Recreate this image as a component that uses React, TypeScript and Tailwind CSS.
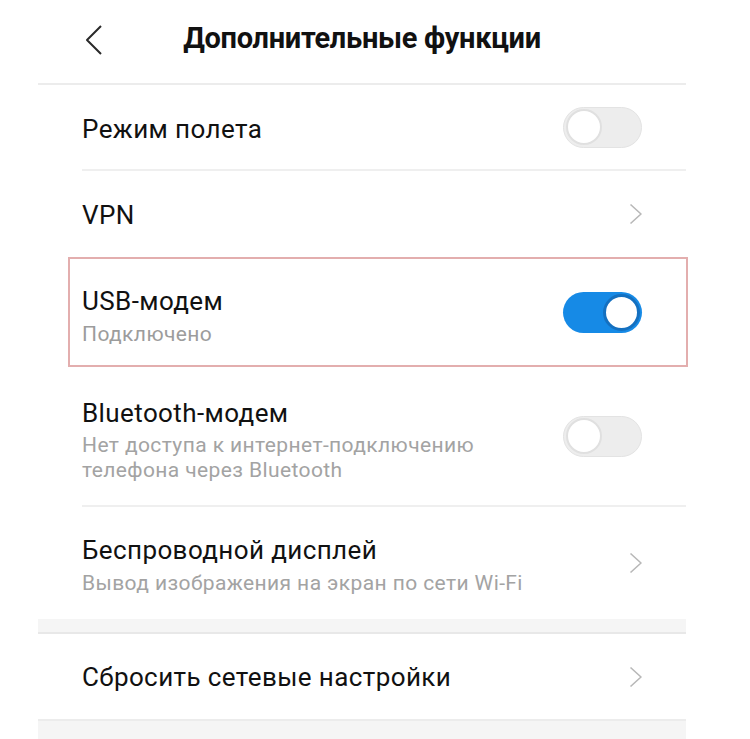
function Chevron() {
    return (
        <svg width="14" height="22" viewBox="0 0 14 22" fill="none" className="mr-[43px]">
            <polyline points="1.5,1.5 12,11 1.5,20.5" stroke="#b8b8b8" strokeWidth="1.6" strokeLinejoin="round" />
        </svg>
    );
}

function Toggle({ on }: { on: boolean }) {
    if (on) {
        return (
            <div className="mr-[44px] w-[79px] h-[41px] rounded-full bg-[#168ae6] flex items-center justify-end pr-[2px]">
                <div className="w-[37px] h-[37px] rounded-full bg-white border-[3px] border-[#1470c0]" />
            </div>
        );
    }
    return (
        <div className="mr-[44px] w-[79px] h-[41px] rounded-full bg-[#ededed] border border-[#e3e3e3] flex items-center pl-[2px]">
            <div className="w-[36px] h-[36px] rounded-full bg-white border-2 border-[#e0e0e0]" />
        </div>
    );
}

function App() {
    const font = { fontFamily: "Roboto, 'Noto Sans', sans-serif" };

    return (
        <div className="w-[750px] h-[739px] bg-white overflow-hidden pl-[38px]" style={font}>
            <div className="w-[648px] flex flex-col">
                {/* Шапка */}
                <div className="relative h-[85px] flex items-center justify-center border-b-2 border-[#ececec]">
                    <svg width="20" height="32" viewBox="0 0 20 32" fill="none" className="absolute left-[46px] top-[24px]">
                        <polyline points="17,2 3,16 17,30" stroke="#2a2a2a" strokeWidth="2" strokeLinejoin="round" />
                    </svg>
                    <h1 className="text-[29px] font-bold text-[#111] tracking-[-0.3px] -mt-[5px]">Дополнительные функции</h1>
                </div>

                {/* Режим полета */}
                <div className="ml-[44px] h-[86px] flex items-center justify-between border-b-2 border-[#efefef]">
                    <span className="text-[26px] tracking-[0.4px] text-[#111] mt-[4px]">Режим полета</span>
                    <Toggle on={false} />
                </div>

                {/* VPN */}
                <div className="ml-[44px] h-[86px] flex items-center justify-between">
                    <span className="text-[26px] tracking-[0.4px] text-[#111] mt-[2px]">VPN</span>
                    <Chevron />
                </div>

                {/* USB-модем */}
                <div className="relative h-[110px] pl-[44px] flex items-center justify-between">
                    <div className="absolute left-[30px] -right-[2px] top-0 bottom-0 border-2 border-[#e3aeae] pointer-events-none" />
                    <div className="flex flex-col mt-[10px]">
                        <span className="text-[26px] tracking-[0.4px] text-[#111] leading-[34px]">USB-модем</span>
                        <span className="text-[21px] tracking-[0.4px] text-[#9c9c9c] leading-[32px]">Подключено</span>
                    </div>
                    <Toggle on={true} />
                </div>

                {/* Bluetooth-модем */}
                <div className="ml-[44px] h-[140px] flex items-center justify-between border-b-2 border-[#efefef]">
                    <div className="flex flex-col mt-[4px]">
                        <span className="text-[26px] tracking-[0.4px] text-[#111] leading-[40px]">Bluetooth-модем</span>
                        <span className="text-[21px] tracking-[0.4px] text-[#a3a3a3] leading-[25px] w-[420px]">Нет доступа к интернет-подключению телефона через Bluetooth</span>
                    </div>
                    <Toggle on={false} />
                </div>

                {/* Беспроводной дисплей */}
                <div className="ml-[44px] h-[112px] flex items-center justify-between">
                    <div className="flex flex-col mt-[7px]">
                        <span className="text-[26px] tracking-[0.4px] text-[#111] leading-[34px]">Беспроводной дисплей</span>
                        <span className="text-[21px] tracking-[0.4px] text-[#a3a3a3] leading-[33px]">Вывод изображения на экран по сети Wi-Fi</span>
                    </div>
                    <Chevron />
                </div>

                <div className="h-[15px] bg-[#f5f5f5] border-b-2 border-[#e8e8e8]" />

                {/* Сбросить сетевые настройки */}
                <div className="pl-[44px] h-[85px] flex items-center justify-between">
                    <span className="text-[26px] tracking-[0.4px] text-[#111] mt-[2px]">Сбросить сетевые настройки</span>
                    <Chevron />
                </div>

                <div className="h-[20px] bg-[#f5f5f5] border-t-2 border-[#ececec]" />
            </div>
        </div>
    );
}

export default App;
